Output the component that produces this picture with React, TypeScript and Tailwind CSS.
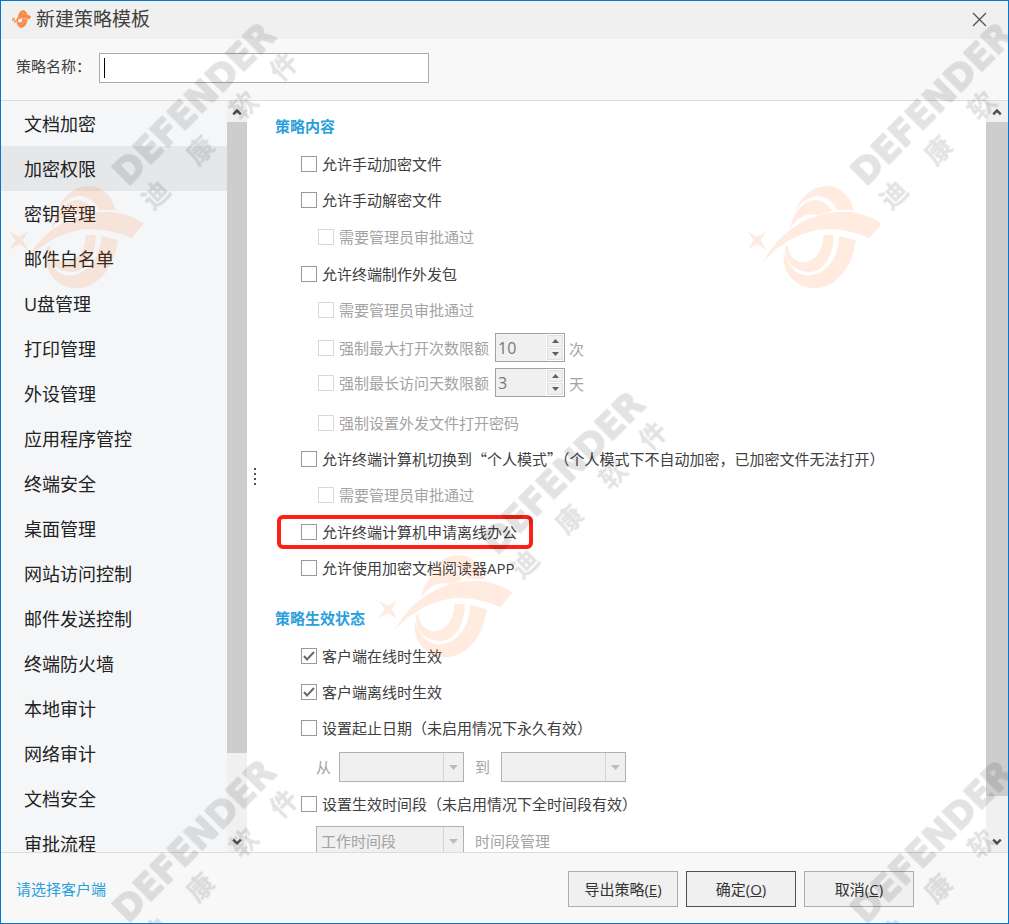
import { useState } from "react";
import type { ReactNode } from "react";

const categories = [
  "文档加密",
  "加密权限",
  "密钥管理",
  "邮件白名单",
  "U盘管理",
  "打印管理",
  "外设管理",
  "应用程序管控",
  "终端安全",
  "桌面管理",
  "网站访问控制",
  "邮件发送控制",
  "终端防火墙",
  "本地审计",
  "网络审计",
  "文档安全",
  "审批流程",
];

const watermarks = [
  { x: 1, y: 0 },
  { x: 739, y: 0 },
  { x: 370, y: 369 },
  { x: 1, y: 737 },
  { x: 739, y: 738 },
];

const watermarkChars = [
  { char: "迪", x: 460, y: 580 },
  { char: "康", x: 594, y: 447 },
  { char: "软", x: 724, y: 312 },
  { char: "件", x: 844, y: 195 },
];

function LogoShapes() {
  return (
    <>
      <path d="M22 690Q38 701 51 708Q64 701 79 690Q70 704 62 718Q70 731 79 747Q64 736 51 729Q38 736 22 747Q32 731 41 718Q32 704 22 690Z" />
      <path d="M168 628C184 582 220 555 262 555C304 556 332 590 341 627L291 627C280 602 258 586 232 585C204 587 184 604 168 628Z" />
      <path d="M150 683C158 640 186 602 222 597C250 598 266 612 275 630Q254 634 235 642C206 634 172 646 150 683Z" />
      <path d="M72 780C106 712 190 632 310 632C356 633 394 646 425 668L388 712C350 692 300 684 260 684C188 688 124 724 72 780Z" />
      <path d="M143 734C146 766 166 784 192 784C226 780 251 748 250 703L281 702C281 768 250 813 206 813C162 812 130 778 136 736Z" />
      <path d="M131 754C146 800 172 824 205 824C258 820 297 770 298 705L348 718C336 802 286 862 222 862C164 858 126 816 131 754Z" />
    </>
  );
}

function Watermark() {
  return (
    <div className="pointer-events-none absolute inset-0 overflow-hidden" aria-hidden="true">
      <svg className="absolute top-0 left-0 h-full w-full">
        {watermarks.map((mark, index) => (
          <g key={index} transform={`translate(${mark.x} ${mark.y}) scale(0.3333)`}>
            <g fill="#ff6a13" opacity="0.13">
              <LogoShapes />
            </g>
            <g fill="#000" stroke="#000" strokeLinejoin="round" opacity="0.11">
              <text
                className="font-['DejaVu_Sans',sans-serif] text-[106px] font-bold"
                strokeWidth="4"
                transform="translate(377 558) rotate(-45)"
              >
                DEFENDER
              </text>
              {watermarkChars.map((item) => (
                <text
                  key={item.char}
                  className="text-[80px] font-bold"
                  strokeWidth="1"
                  textAnchor="middle"
                  transform={`translate(${item.x} ${item.y}) rotate(-45)`}
                  y="30"
                >
                  {item.char}
                </text>
              ))}
            </g>
          </g>
        ))}
      </svg>
    </div>
  );
}

function ScrollBar({ className, thumb }: { className: string; thumb: string }) {
  return (
    <div className={`flex shrink-0 flex-col items-center bg-[#f0f0f0] ${className}`}>
      <svg className="h-[21px] w-[18px] shrink-0" viewBox="0 0 18 22" fill="none" stroke="#505050" strokeWidth="2.5">
        <path d="M5 14L9 10L13 14" />
      </svg>
      <div className="flex min-h-0 w-full grow flex-col">
        <div className={`w-full bg-[#cdcdcd] ${thumb}`}></div>
      </div>
      <svg className="h-[21px] w-[18px] shrink-0" viewBox="0 0 18 22" fill="none" stroke="#505050" strokeWidth="2.5">
        <path d="M5 9L9 13L13 9" />
      </svg>
    </div>
  );
}

interface CheckProps {
  label: string;
  className?: string;
  defaultChecked?: boolean;
  disabled?: boolean;
  children?: ReactNode;
}

function Check({ label, className = "", defaultChecked, disabled, children }: CheckProps) {
  return (
    <label
      className={`relative flex items-center gap-[5px] whitespace-nowrap ${disabled ? "text-[#a3a3a3]" : "text-[#404040]"} ${className}`}
    >
      <span className="grid shrink-0">
        <input
          type="checkbox"
          defaultChecked={defaultChecked}
          disabled={disabled}
          className="peer col-start-1 row-start-1 h-4 w-4 appearance-none border border-[#999] bg-white disabled:border-[#d8d8d8]"
        />
        <svg
          className="pointer-events-none invisible col-start-1 row-start-1 h-4 w-4 peer-checked:visible"
          viewBox="0 0 16 16"
          fill="none"
          stroke="#6a6a6a"
          strokeWidth="2"
        >
          <path d="M3 8L6 11.5L13 4" />
        </svg>
      </span>
      {label}
      {children}
    </label>
  );
}

function SpinRow({ label, value, unit }: { label: string; value: number; unit: string }) {
  return (
    <div className="flex h-[35px] items-center pl-[43px]">
      <Check label={label} disabled />
      <div className="ml-[6px] flex h-[29px] w-[70px] border border-[#a0a0a8] bg-[#f0f0f0]">
        <input
          type="text"
          inputMode="numeric"
          aria-label={label}
          defaultValue={value}
          disabled
          className="min-w-0 grow pl-[2px] text-base text-[#7a7a7a]"
        />
        <div className="flex w-[18px] shrink-0 flex-col gap-px bg-white p-px">
          <button type="button" disabled aria-label="增加" className="flex grow items-center justify-center border border-[#e0e0e0] bg-[#f0f0f0]">
            <svg className="h-1 w-[7px]" viewBox="0 0 7 4" fill="#606060">
              <path d="M0 4L3.5 0L7 4Z" />
            </svg>
          </button>
          <button type="button" disabled aria-label="减少" className="flex grow items-center justify-center border border-[#e0e0e0] bg-[#f0f0f0]">
            <svg className="h-1 w-[7px]" viewBox="0 0 7 4" fill="#606060">
              <path d="M0 0L3.5 4L7 0Z" />
            </svg>
          </button>
        </div>
      </div>
      <span className="ml-1 pt-0.5 text-[#a3a3a3]">{unit}</span>
    </div>
  );
}

function DropDown({ label, className, option }: { label: string; className: string; option?: string }) {
  return (
    <div className={`grid h-[30px] shrink-0 border border-[#b0b0b0] bg-[#f0f0f0] ${className}`}>
      <select aria-label={label} disabled className="col-start-1 row-start-1 appearance-none pl-1 text-[#a3a3a3] opacity-100">
        <option>{option}</option>
      </select>
      <div className="pointer-events-none col-start-1 row-start-1 flex w-5 items-center justify-center justify-self-end border-l border-[#d4d4d4]">
        <svg className="h-[5px] w-[9px]" viewBox="0 0 9 5" fill="#bcbcbc">
          <path d="M0 0L4.5 5L9 0Z" />
        </svg>
      </div>
    </div>
  );
}

function FooterButton({ text, hotkey, primary }: { text: string; hotkey: string; primary?: boolean }) {
  return (
    <button
      type="button"
      className={`h-9 w-[110px] border bg-[#f0f0f0] text-[#333] ${primary ? "border-[#505050]" : "border-[#adadad]"}`}
    >
      {text}(<span className="underline">{hotkey}</span>)
    </button>
  );
}

export default function App() {
  const [active, setActive] = useState("加密权限");

  return (
    <div
      lang="zh-CN"
      className="relative flex h-screen flex-col overflow-hidden border border-[#0078d0] bg-[#f8f8f8] font-['Open_Sans','Noto_Sans_CJK_SC',sans-serif] text-[15px] leading-5 text-[#404040]"
    >
      <header className="flex h-[38px] shrink-0 items-center bg-[#f0f0f0] pr-[21px] pb-0.5 pl-[11px]">
        <svg className="h-[18px] w-[19px]" viewBox="20 545 410 328" preserveAspectRatio="none" fill="#f98a45" stroke="#f98a45" strokeWidth="14">
          <LogoShapes />
        </svg>
        <h1 className="ml-[5px] text-[19px]">新建策略模板</h1>
        <button type="button" aria-label="关闭" className="ml-auto">
          <svg className="h-[15px] w-[15px]" viewBox="0 0 15 15" stroke="#505050" strokeWidth="1.3">
            <path d="M1 1L14 14M14 1L1 14" />
          </svg>
        </button>
      </header>

      <div className="flex h-[61px] shrink-0 items-center pb-1 pl-[15px]">
        <label htmlFor="policy-name" className="w-[83px] pb-1 whitespace-nowrap">
          策略名称：
        </label>
        <div className="relative">
          <input id="policy-name" type="text" className="block h-[30px] w-[330px] border border-[#ababab] bg-white px-1 outline-none" />
          <span className="absolute top-[5px] left-[5px] h-5 w-px bg-black"></span>
        </div>
      </div>

      <main className="flex min-h-0 grow border-y border-[#dcdcdc] bg-white">
        <nav className="w-[226px] shrink-0 overflow-hidden bg-[#f5f6f8]">
          {categories.map((name) => (
            <button
              key={name}
              type="button"
              onClick={() => setActive(name)}
              className={`block h-[45px] w-full pl-[23px] text-left text-lg text-[#222] ${active === name ? "bg-[#e6e7e9]" : ""}`}
            >
              {name}
            </button>
          ))}
        </nav>
        <ScrollBar className="w-5" thumb="h-[89%]" />

        <div className="flex w-4 shrink-0 flex-col items-center justify-center gap-[3px]">
          <span className="h-0.5 w-0.5 bg-[#505050]"></span>
          <span className="h-0.5 w-0.5 bg-[#505050]"></span>
          <span className="h-0.5 w-0.5 bg-[#505050]"></span>
          <span className="h-0.5 w-0.5 bg-[#505050]"></span>
        </div>

        <div className="min-w-0 grow overflow-hidden pt-2 pl-3">
          <h2 className="flex h-[37px] items-center pb-[3px] font-bold text-[#2b9fdc]">策略内容</h2>
          <div className="flex h-9 items-center pl-[26px]">
            <Check label="允许手动加密文件" />
          </div>
          <div className="flex h-9 items-center pl-[26px]">
            <Check label="允许手动解密文件" />
          </div>
          <div className="flex h-[37px] items-center pl-[43px]">
            <Check label="需要管理员审批通过" disabled />
          </div>
          <div className="flex h-[37px] items-center pl-[26px]">
            <Check label="允许终端制作外发包" />
          </div>
          <div className="flex h-9 items-center pl-[43px]">
            <Check label="需要管理员审批通过" disabled />
          </div>
          <div className="pt-0.5 pb-[5px]">
            <SpinRow label="强制最大打开次数限额" value={10} unit="次" />
            <SpinRow label="强制最长访问天数限额" value={3} unit="天" />
          </div>
          <div className="flex h-9 items-center pl-[43px]">
            <Check label="强制设置外发文件打开密码" disabled />
          </div>
          <div className="flex h-9 items-center pl-[26px]">
            <Check
              className="font-['Noto_Sans_CJK_SC',sans-serif]"
              label="允许终端计算机切换到“个人模式”（个人模式下不自动加密，已加密文件无法打开）"
            />
          </div>
          <div className="flex h-9 items-center pl-[43px]">
            <Check label="需要管理员审批通过" disabled />
          </div>
          <div className="flex h-[37px] items-center pl-[26px]">
            <Check label="允许终端计算机申请离线办公">
              <span className="pointer-events-none absolute -inset-y-[7px] -right-4 -left-6 rounded-md border-4 border-[#fe1f15]"></span>
            </Check>
          </div>
          <div className="flex h-9 items-center pl-[26px]">
            <Check label="允许使用加密文档阅读器APP" />
          </div>

          <h2 className="mt-[14px] flex h-[37px] items-center pb-[2px] font-bold text-[#2b9fdc]">策略生效状态</h2>
          <div className="flex h-[37px] items-center pl-[26px]">
            <Check label="客户端在线时生效" defaultChecked />
          </div>
          <div className="flex h-9 items-center pl-[26px]">
            <Check label="客户端离线时生效" defaultChecked />
          </div>
          <div className="flex h-9 items-center pl-[26px]">
            <Check label="设置起止日期（未启用情况下永久有效）" />
          </div>
          <div className="mt-0.5 flex h-[38px] items-center pl-[41px] text-[#a3a3a3]">
            <span className="w-[23px]">从</span>
            <DropDown label="从" className="w-[125px]" />
            <span className="mr-[11px] ml-[11px]">到</span>
            <DropDown label="到" className="w-[125px]" />
          </div>
          <div className="flex h-9 items-center pl-[26px]">
            <Check label="设置生效时间段（未启用情况下全时间段有效）" />
          </div>
          <div className="flex h-[38px] items-center pl-[41px] text-[#a3a3a3]">
            <DropDown label="时间段" className="w-[148px]" option="工作时间段" />
            <span className="ml-[11px]">时间段管理</span>
          </div>
        </div>
        <ScrollBar className="w-[22px]" thumb="h-[95%]" />
      </main>

      <footer className="flex h-[70px] shrink-0 items-center gap-2 pt-px pr-[94px] pl-[15px]">
        <a href="#clients" className="mr-auto text-[#2b9fdc]">
          请选择客户端
        </a>
        <FooterButton text="导出策略" hotkey="E" />
        <FooterButton text="确定" hotkey="O" primary />
        <FooterButton text="取消" hotkey="C" />
      </footer>

      <Watermark />
    </div>
  );
}
